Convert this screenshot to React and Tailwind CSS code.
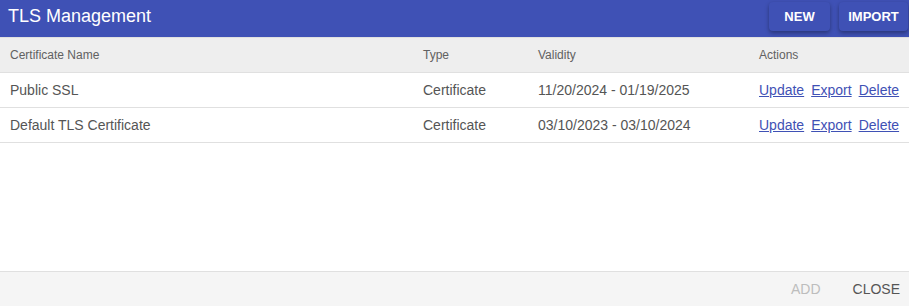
export default function App() {
  const rows = [
    { name: "Public SSL", type: "Certificate", validity: "11/20/2024 - 01/19/2025" },
    { name: "Default TLS Certificate", type: "Certificate", validity: "03/10/2023 - 03/10/2024" },
  ];
  return (
    <div className="w-[909px] h-[306px] flex flex-col bg-white overflow-hidden" style={{ fontFamily: "'Liberation Sans', Arial, sans-serif" }}>
      <div className="h-[37px] bg-[#3f51b5] flex items-center justify-between pl-2 pr-[1px] shrink-0">
        <div className="text-white text-[18px] leading-none mb-[5px]">TLS Management</div>
        <div className="flex gap-[9px] self-start mt-[2px]">
          <button className="h-[29px] w-[61px] bg-[#3f51b5] text-white text-[13px] font-bold rounded-[4px] shadow-[0_2px_4px_rgba(0,0,0,0.35)]">NEW</button>
          <button className="h-[29px] w-[69px] bg-[#3f51b5] text-white text-[13px] font-bold rounded-[4px] shadow-[0_2px_4px_rgba(0,0,0,0.35)]">IMPORT</button>
        </div>
      </div>
      <div className="flex-1 flex flex-col">
        <div className="h-[36px] bg-[#eeeeee] border-y border-[#e0e0e0] flex items-center text-[12px] text-[#616161]">
          <div className="w-[423px] pl-[10px]">Certificate Name</div>
          <div className="w-[115px]">Type</div>
          <div className="w-[221px]">Validity</div>
          <div>Actions</div>
        </div>
        {rows.map((r) => (
          <div key={r.name} className="h-[35px] border-b border-[#e0e0e0] flex items-center text-[14px] text-[#555]">
            <div className="w-[423px] pl-[10px]">{r.name}</div>
            <div className="w-[115px]">{r.type}</div>
            <div className="w-[221px]">{r.validity}</div>
            <div className="flex gap-[7px] text-[#3f51b5]">
              <a className="underline">Update</a>
              <a className="underline">Export</a>
              <a className="underline">Delete</a>
            </div>
          </div>
        ))}
      </div>
      <div className="h-[35px] bg-[#f5f5f5] border-t border-[#e0e0e0] flex items-center justify-end gap-[32px] pr-[9px] text-[14px] shrink-0">
        <span className="text-[#bdbdbd]">ADD</span>
        <span className="text-[#555]">CLOSE</span>
      </div>
    </div>
  );
}
